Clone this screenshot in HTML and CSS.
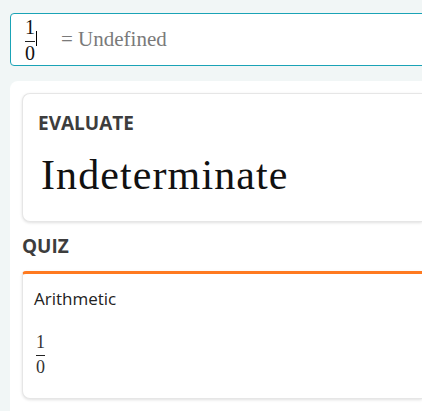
FILE: index.html
```html
<!DOCTYPE html>
<html>
<head>
<meta charset="utf-8">
<link rel="stylesheet" href="styles.css">
</head>
<body>
<div class="input">
  <span class="frac big"><span class="num">1</span><span class="den">0</span></span><span class="cursor"></span>
  <span class="result">= Undefined</span>
</div>
<div class="panel">
  <div class="card eval">
    <div class="label">EVALUATE</div>
    <div class="answer">Indeterminate</div>
  </div>
  <div class="section">QUIZ</div>
  <div class="card quiz">
    <div class="topic">Arithmetic</div>
    <span class="frac small"><span class="num">1</span><span class="den">0</span></span>
  </div>
</div>
</body>
</html>
```
FILE: styles.css
```css
html, body { margin: 0; padding: 0; }
body {
  background: #f1f6f6;
  width: 422px;
  height: 411px;
  overflow: hidden;
  font-family: "Open Sans", "Noto Sans", sans-serif;
}
.input {
  margin: 13px -20px 0 10px;
  height: 51px;
  border: 1px solid #1aa3b6;
  border-radius: 4px;
  background: #fff;
  display: flex;
  align-items: center;
  padding-left: 14px;
  font-family: "Liberation Serif", serif;
}
.frac {
  display: inline-flex;
  flex-direction: column;
  align-items: center;
  line-height: 1;
}
.frac .num { border-bottom: 1px solid #222; }
.frac.big { font-size: 20px; color: #111; }
.frac.big .num { padding-bottom: 4px; }
.frac.big .den { padding-top: 1px; }
.cursor {
  width: 1px;
  height: 15px;
  background: #000;
  margin: 0 0 3px 1px;
}
.result {
  margin-left: 24px;
  font-size: 21px;
  color: #7a7a7a;
}
.panel {
  margin: 15px 0 0 10px;
  background: #fff;
  border-top-left-radius: 8px;
  padding: 12px 0 20px 12px;
}
.card {
  background: #fff;
  border: 1px solid #e6e6e6;
  border-right: none;
  border-radius: 8px 0 0 8px;
  box-shadow: 0 1px 3px rgba(0,0,0,0.12);
}
.eval {
  height: 129px;
  box-sizing: border-box;
  padding: 16px 16px 0 15px;
}
.label {
  font-weight: 700;
  font-size: 19px;
  line-height: 26px;
  color: #3d3d3d;
}
.answer {
  font-family: "Liberation Serif", serif;
  font-size: 42px;
  letter-spacing: 1.1px;
  color: #111;
  margin-top: 16px;
  margin-left: 3px;
  line-height: 1.1;
}
.section {
  font-weight: 700;
  font-size: 19px;
  line-height: 26px;
  color: #3d3d3d;
  margin: 11px 0 12px 0;
}
.quiz {
  border-top: 3px solid #ff7a20;
  border-radius: 4px 0 0 8px;
  height: 128px;
  box-sizing: border-box;
  padding: 13px 12px 0 11px;
}
.topic {
  font-size: 17px;
  line-height: 23px;
  color: #222;
}
.frac.small {
  font-family: "Liberation Serif", serif;
  font-size: 18px;
  color: #333;
  margin: 23px 0 0 2px;
}
.frac.small .num { padding-bottom: 4px; }
.frac.small .den { padding-top: 2px; }
```
